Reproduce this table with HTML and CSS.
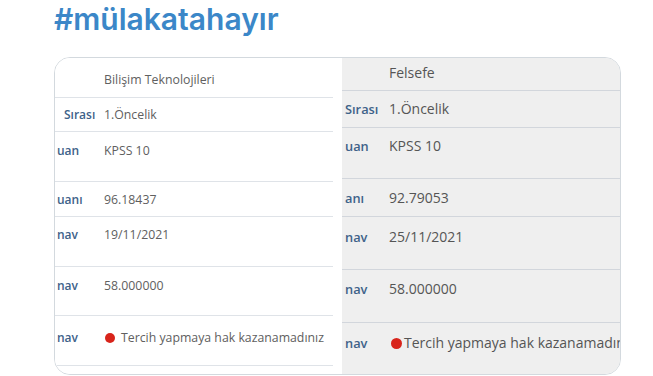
FILE: index.html
```html
<!DOCTYPE html>
<html lang="tr">
<head>
<meta charset="utf-8">
<title>#mülakatahayır</title>
<link rel="stylesheet" href="styles.css">
</head>
<body>
<p class="tweet-text">#mülakatahayır</p>
<div class="media">
  <div class="shot shot-left">
    <div class="tbl">
      <div class="row"><div class="lbl"></div><div class="val">Bilişim Teknolojileri</div></div>
      <div class="row"><div class="lbl lbl-indent">Sırası</div><div class="val">1.Öncelik</div></div>
      <div class="row"><div class="lbl">uan</div><div class="val">KPSS 10</div></div>
      <div class="row"><div class="lbl">uanı</div><div class="val">96.18437</div></div>
      <div class="row"><div class="lbl">nav</div><div class="val">19/11/2021</div></div>
      <div class="row"><div class="lbl">nav</div><div class="val">58.000000</div></div>
      <div class="row"><div class="lbl">nav</div><div class="val"><span class="dot"></span>Tercih yapmaya hak kazanamadınız</div></div>
    </div>
  </div>
  <div class="shot shot-right">
    <div class="tbl">
      <div class="row"><div class="lbl"></div><div class="val">Felsefe</div></div>
      <div class="row"><div class="lbl">Sırası</div><div class="val">1.Öncelik</div></div>
      <div class="row"><div class="lbl">uan</div><div class="val">KPSS 10</div></div>
      <div class="row"><div class="lbl">anı</div><div class="val">92.79053</div></div>
      <div class="row"><div class="lbl">nav</div><div class="val">25/11/2021</div></div>
      <div class="row"><div class="lbl">nav</div><div class="val">58.000000</div></div>
      <div class="row"><div class="lbl">nav</div><div class="val"><span class="dot"></span>Tercih yapmaya hak kazanamadınız</div></div>
    </div>
  </div>
</div>
</body>
</html>
```
FILE: styles.css
```css
html, body {
  margin: 0;
  padding: 0;
  background: #ffffff;
}

.tweet-text {
  margin: 0;
  padding: 2px 0 21px 54px;
  font-family: Inter, "Noto Sans", sans-serif;
  font-weight: 600;
  font-size: 30px;
  line-height: 34px;
  color: #3b87c8;
}

.media {
  margin-left: 54px;
  width: 567px;
  height: 318px;
  box-sizing: border-box;
  border: 1px solid #d3d9de;
  border-radius: 16px;
  overflow: hidden;
  display: flex;
  font-family: "Open Sans", "Noto Sans", sans-serif;
}

.shot {
  overflow: hidden;
}

.shot-left {
  width: 287px;
  flex: none;
  background: #ffffff;
}

.shot-left .tbl {
  width: 278px;
}

.shot-right {
  flex: 1;
  background: #efefef;
}

.row {
  display: flex;
  box-sizing: border-box;
  white-space: nowrap;
}

.lbl {
  flex: none;
  box-sizing: border-box;
  overflow: hidden;
  font-weight: 600;
  color: #3e6289;
}

.val {
  flex: 1;
  display: flex;
  align-items: center;
  align-self: flex-start;
  overflow: hidden;
}

.dot {
  flex: none;
  border-radius: 50%;
  background: #d8241b;
}

/* left screenshot (smaller scale) */
.shot-left .row {
  line-height: 16px;
  border-bottom: 1px solid #dfe3e8;
}
.shot-left .lbl {
  width: 45px;
  padding-left: 2px;
  font-size: 12px;
}
.shot-left .lbl-indent {
  padding-left: 9px;
}
.shot-left .val {
  padding-left: 4px;
  font-size: 12.3px;
  color: #606060;
}
.shot-left .dot {
  width: 10px;
  height: 10px;
  margin: 0 6px 0 1px;
}
.shot-left .row:nth-child(1) { height: 40px; padding-top: 14px; }
.shot-left .row:nth-child(2) { height: 34px; padding-top: 9px; }
.shot-left .row:nth-child(3) { height: 50px; padding-top: 11px; }
.shot-left .row:nth-child(4) { height: 35px; padding-top: 10px; }
.shot-left .row:nth-child(5) { height: 50px; padding-top: 10px; }
.shot-left .row:nth-child(6) { height: 49px; padding-top: 11px; }
.shot-left .row:nth-child(7) { height: 50px; padding-top: 14px; }

/* right screenshot (larger scale) */
.shot-right .row {
  line-height: 18px;
  border-bottom: 1px solid #d2d6dc;
}
.shot-right .lbl {
  width: 40px;
  padding-left: 3px;
  font-size: 12.8px;
}
.shot-right .val {
  padding-left: 7px;
  font-size: 14px;
  color: #555555;
}
.shot-right .dot {
  width: 11px;
  height: 11px;
  margin: 0 2px 0 2px;
}
.shot-right .row:nth-child(1) { height: 33px; padding-top: 6px; }
.shot-right .row:nth-child(2) { height: 37px; padding-top: 9px; }
.shot-right .row:nth-child(3) { height: 51px; padding-top: 9px; }
.shot-right .row:nth-child(4) { height: 38px; padding-top: 10px; }
.shot-right .row:nth-child(5) { height: 53px; padding-top: 11px; }
.shot-right .row:nth-child(6) { height: 53px; padding-top: 10px; }
.shot-right .row:nth-child(7) { height: 52px; padding-top: 11px; border-bottom: none; }
```
